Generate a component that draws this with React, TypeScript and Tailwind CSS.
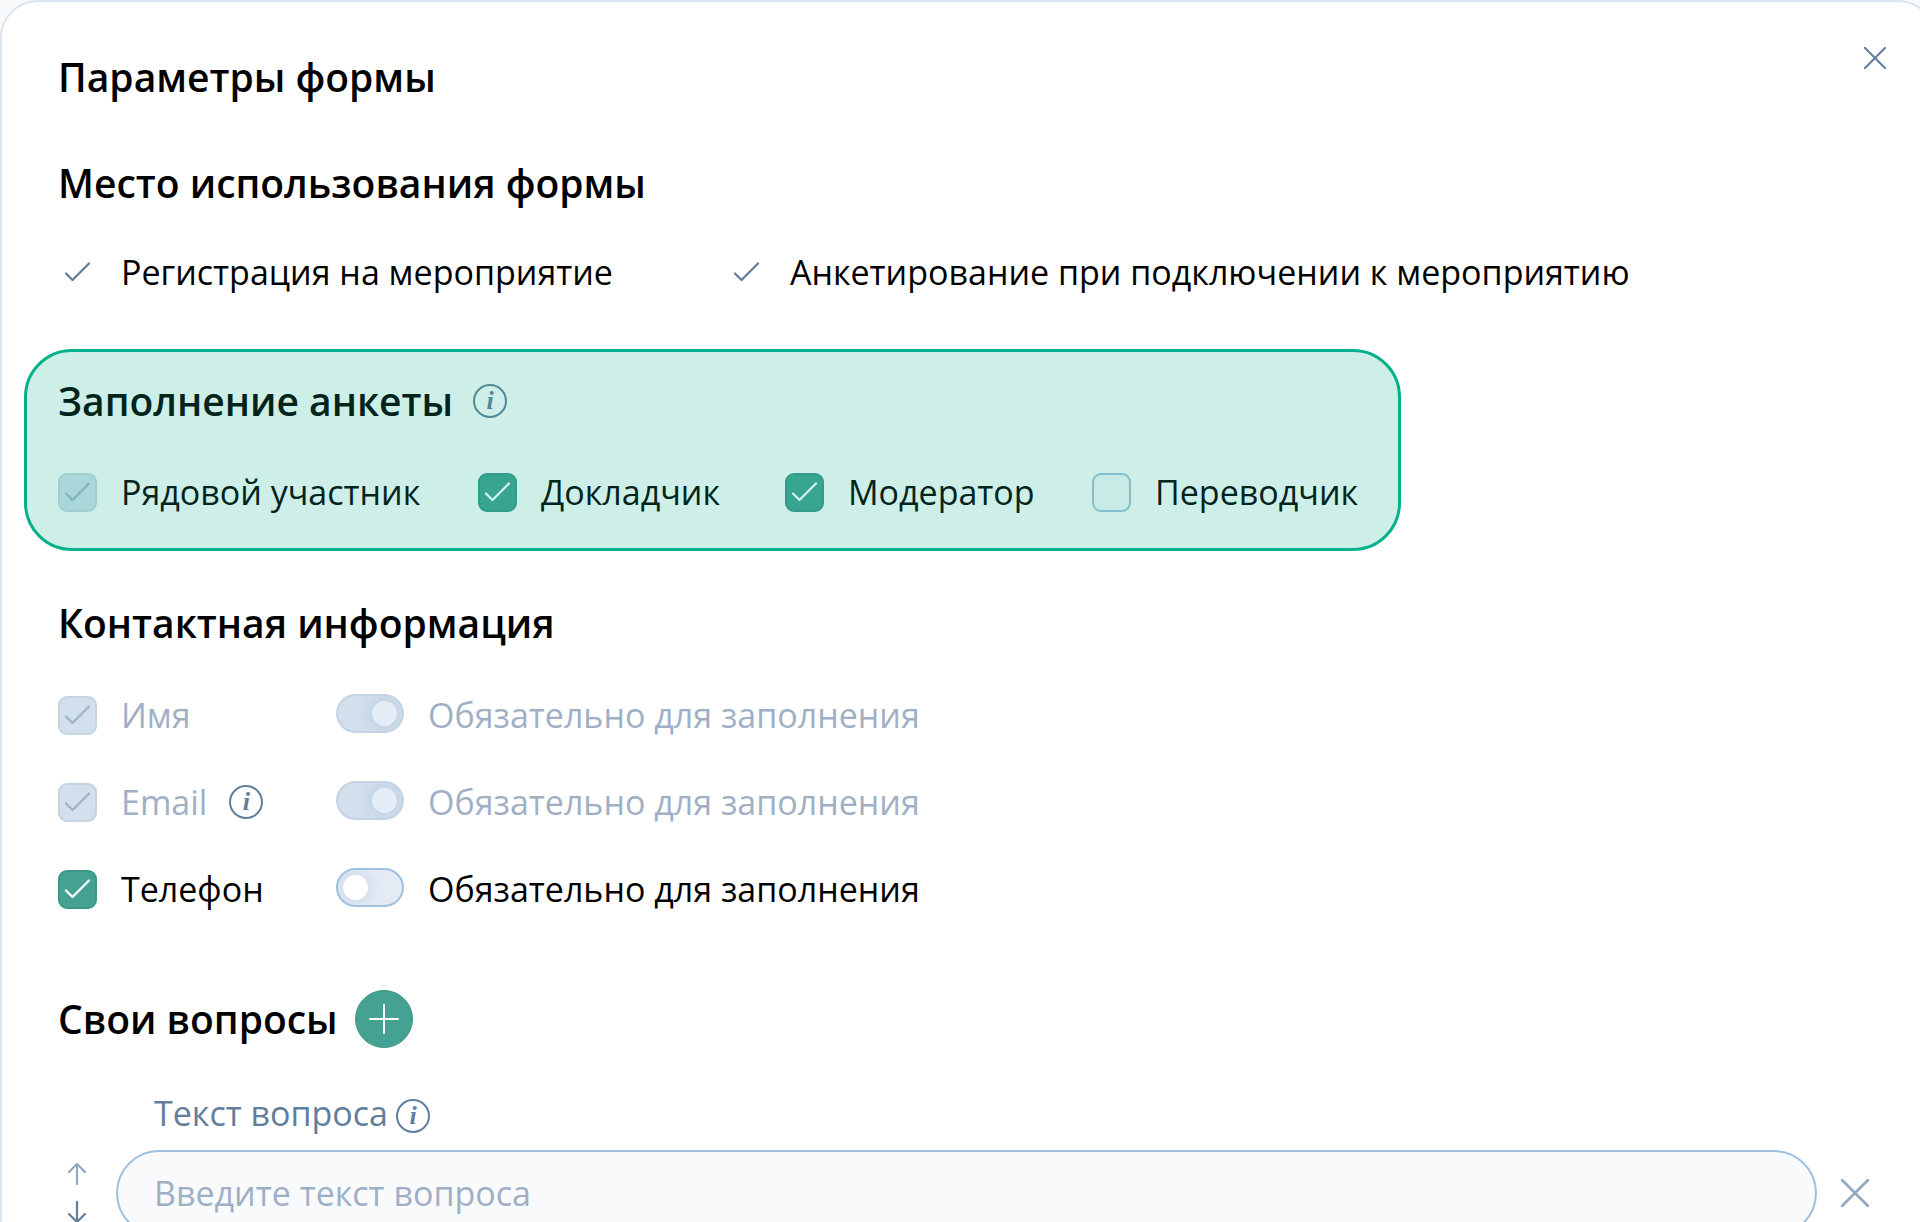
import { useState } from "react";
import type { ReactNode } from "react";
import clsx from "clsx";

const ROLES = [
  { id: "member", label: "Рядовой участник", checked: true, disabled: true },
  { id: "speaker", label: "Докладчик", checked: true, disabled: false },
  { id: "moderator", label: "Модератор", checked: true, disabled: false },
  { id: "translator", label: "Переводчик", checked: false, disabled: false },
];

const CONTACTS = [
  { id: "name", label: "Имя", locked: true, hint: false },
  { id: "email", label: "Email", locked: true, hint: true },
  { id: "phone", label: "Телефон", locked: false, hint: false },
];

const Tick = ({ className }: { className?: string }) => (
  <svg
    viewBox="0 0 39 39"
    fill="none"
    stroke="currentColor"
    strokeWidth="2.3"
    strokeLinecap="round"
    strokeLinejoin="round"
    className={clsx("pointer-events-none size-[39px] shrink-0", className)}
  >
    <path d="M8 20.5 14.5 27 31 10.5" />
  </svg>
);

const Cross = ({ className }: { className: string }) => (
  <svg
    viewBox="0 0 28 28"
    fill="none"
    stroke="currentColor"
    strokeWidth="2.6"
    strokeLinecap="round"
    className={className}
  >
    <path d="M1 1 27 27M27 1 1 27" />
  </svg>
);

const Heading = ({ children }: { children: ReactNode }) => (
  <h2 className="text-[39px] leading-14 font-semibold">{children}</h2>
);

const Hint = ({ tinted = false }: { tinted?: boolean }) => (
  <button
    type="button"
    aria-label="Подсказка"
    className={clsx(
      "flex size-[34px] shrink-0 items-center justify-center rounded-full border-2 font-['Liberation_Serif',serif] text-[26px] leading-none font-bold italic",
      tinted ? "border-[#4f8b97] text-[#4f8b97]" : "border-[#627e9c] text-[#627e9c]",
    )}
  >
    i
  </button>
);

interface CheckboxProps {
  label: string;
  defaultChecked: boolean;
  disabled: boolean;
  tinted?: boolean;
}

const Checkbox = ({ label, defaultChecked, disabled, tinted = false }: CheckboxProps) => {
  const [checked, setChecked] = useState(defaultChecked);

  return (
    <label
      className={clsx(
        "flex items-center gap-6 whitespace-nowrap",
        tinted && "text-[#03241c]",
        !tinted && disabled && "text-[#9fb0c5]",
      )}
    >
      <span className="grid">
        <input
          type="checkbox"
          checked={checked}
          disabled={disabled}
          onChange={() => setChecked(!checked)}
          className={clsx(
            "col-start-1 row-start-1 size-[39px] appearance-none rounded-[9px] border-2",
            !checked && (tinted ? "border-[#81bfcd] bg-[#c8ebe5]" : "border-[#a0c0e0] bg-white"),
            checked && disabled && (tinted ? "border-[#9fd0d1] bg-[#a9d7da]" : "border-[#c3d4e3] bg-[#d2e0ed]"),
            checked && !disabled && (tinted ? "border-[#319c89] bg-[#38a591]" : "border-[#3c9887] bg-[#45a191]"),
          )}
        />
        {checked && (
          <Tick
            className={clsx(
              "col-start-1 row-start-1",
              disabled && (tinted ? "text-[#7fb5b8]" : "text-[#9fb2c8]"),
              !disabled && (tinted ? "text-[#d3f2eb]" : "text-white"),
            )}
          />
        )}
      </span>
      {label}
    </label>
  );
};

const RequiredSwitch = ({ locked }: { locked: boolean }) => {
  const [on, setOn] = useState(locked);

  return (
    <label
      className={clsx("flex items-center gap-6 whitespace-nowrap", locked && "text-[#9fb0c5]")}
    >
      <input
        type="checkbox"
        role="switch"
        checked={on}
        disabled={locked}
        onChange={() => setOn(!on)}
        className={clsx(
          "mb-1 flex h-[39px] w-[68px] shrink-0 appearance-none items-center overflow-hidden rounded-full border-2 px-[5px] before:size-[25px] before:rounded-full",
          on ? "justify-end" : "justify-start",
          locked
            ? "border-[#c3d4e4] bg-[#d2e0ed] before:bg-[#e4ecf5] before:shadow-[0_0_16px_4px_#bdcfe1]"
            : "border-[#a0c0e0] bg-[#e4ebf4] before:bg-white before:shadow-[0_0_16px_3px_#c8d8e8]",
        )}
      />
      Обязательно для заполнения
    </label>
  );
};

const Arrow = ({ down = false }: { down?: boolean }) => (
  <button
    type="button"
    aria-label={down ? "Переместить ниже" : "Переместить выше"}
    className={down ? "text-[#627e9c]" : "text-[#92a7c0]"}
  >
    <svg
      viewBox="0 0 18 22"
      fill="none"
      stroke="currentColor"
      strokeWidth="2.2"
      strokeLinecap="round"
      strokeLinejoin="round"
      className={clsx("h-[22px] w-[18px]", down && "rotate-180")}
    >
      <path d="M9 21V1M1 9 9 1l8 8" />
    </svg>
  </button>
);

export default function App() {
  const [question, setQuestion] = useState("");

  return (
    <div className="h-screen overflow-hidden bg-[#f8fafb] font-['Open_Sans',sans-serif] text-[34px] leading-12 text-black">
      <main className="-mr-4 min-h-screen rounded-t-[38px] border-2 border-[#dbe5f0] bg-white pt-[47px] pr-[117px] pl-14">
        <header className="flex items-start justify-between">
          <h1 className="text-[39px] leading-14 font-semibold">Параметры формы</h1>
          <button type="button" aria-label="Закрыть" className="-mt-0.5 -mr-[69px] text-[#627e9c]">
            <Cross className="size-[22px]" />
          </button>
        </header>

        <section className="mt-[50px]">
          <Heading>Место использования формы</Heading>
          <ul className="mt-[37px] flex gap-[114px] whitespace-nowrap">
            <li className="flex items-center gap-6">
              <Tick className="text-[#627e9c]" />
              Регистрация на мероприятие
            </li>
            <li className="flex items-center gap-6">
              <Tick className="text-[#627e9c]" />
              Анкетирование при подключении к мероприятию
            </li>
          </ul>
        </section>

        {/* Who fills the form in */}
        <section className="mt-[53px] -ml-[34px] w-fit rounded-[48px] border-3 border-[#05b18b] bg-[#cdefe7] pt-[21px] pr-10 pb-8 pl-[31px] text-[#03241c]">
          <div className="flex items-center gap-5">
            <Heading>Заполнение анкеты</Heading>
            <Hint tinted />
          </div>
          <div className="mt-[39px] grid grid-cols-[420px_307px_307px_auto]">
            {ROLES.map((role) => (
              <Checkbox
                key={role.id}
                label={role.label}
                defaultChecked={role.checked}
                disabled={role.disabled}
                tinted
              />
            ))}
          </div>
        </section>

        {/* Contact fields */}
        <section className="mt-11">
          <Heading>Контактная информация</Heading>
          <div className="mt-10 grid grid-cols-[278px_auto] gap-y-[39px]">
            {CONTACTS.map((field) => (
              <div key={field.id} className="col-span-2 grid grid-cols-subgrid items-center">
                <div className="flex items-center gap-[22px]">
                  <Checkbox label={field.label} defaultChecked disabled={field.locked} />
                  {field.hint && <Hint />}
                </div>
                <RequiredSwitch locked={field.locked} />
              </div>
            ))}
          </div>
        </section>

        {/* Custom questions */}
        <section className="mt-[77px]">
          <div className="flex items-center gap-[17px]">
            <Heading>Свои вопросы</Heading>
            <button
              type="button"
              aria-label="Добавить вопрос"
              className="flex size-[58px] items-center justify-center rounded-full border border-[#3c9887] bg-[#45a191] text-white"
            >
              <svg viewBox="0 0 30 30" fill="none" stroke="currentColor" strokeWidth="2" strokeLinecap="round" className="size-[30px]">
                <path d="M15 1v28M1 15h28" />
              </svg>
            </button>
          </div>

          <div className="mt-[41px] flex items-center gap-2 pl-24 text-[#627e9c]">
            <label htmlFor="question">Текст вопроса</label>
            <span className="pt-1.5">
              <Hint />
            </span>
          </div>
          <div className="mt-[13px] flex items-center">
            <div className="flex w-[58px] shrink-0 flex-col items-start gap-4 pl-2.5">
              <Arrow />
              <Arrow down />
            </div>
            <input
              id="question"
              type="text"
              value={question}
              placeholder="Введите текст вопроса"
              onChange={(e) => setQuestion(e.target.value)}
              className="h-[86px] min-w-0 flex-1 rounded-full border-2 border-[#a0c0e0] bg-[#f8fafc] px-9 placeholder:text-[#9fb0c5]"
            />
            <button type="button" aria-label="Удалить вопрос" className="-mr-[52px] ml-6 text-[#92a7c0]">
              <Cross className="size-7" />
            </button>
          </div>
        </section>
      </main>
    </div>
  );
}
